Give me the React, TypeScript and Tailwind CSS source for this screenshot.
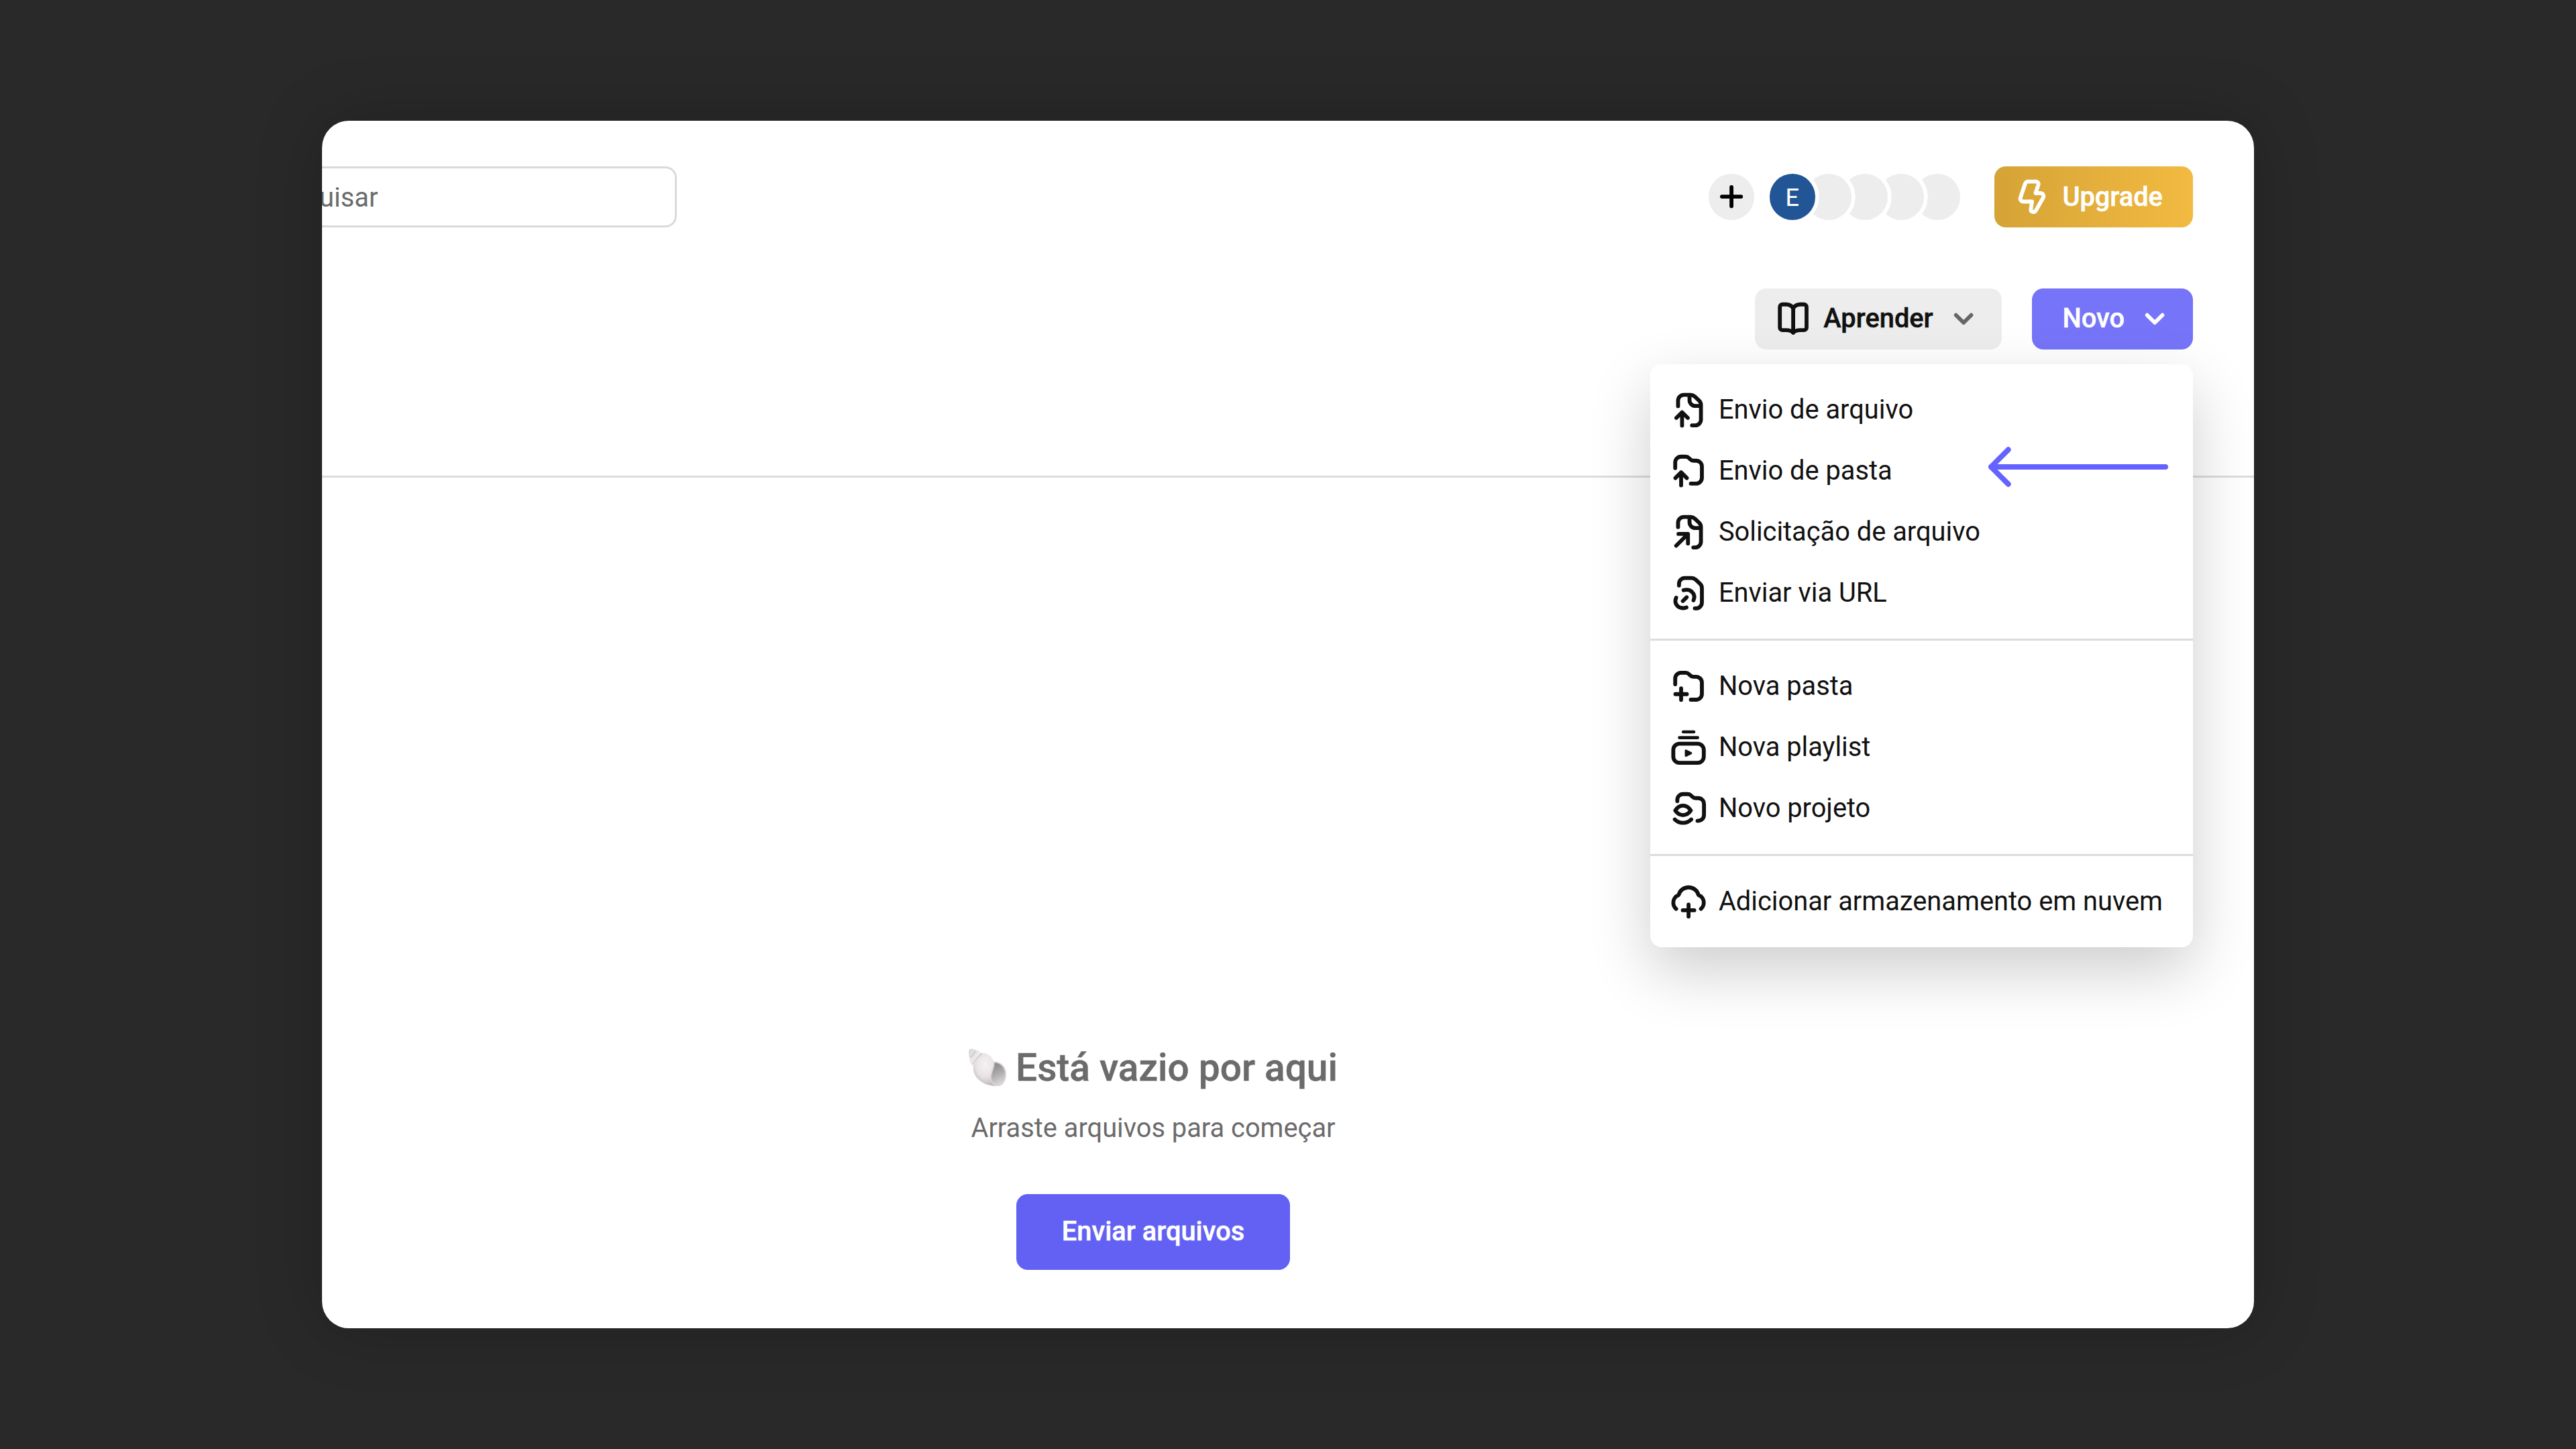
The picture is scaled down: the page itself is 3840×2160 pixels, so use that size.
import type { ReactNode } from "react";

interface IconProps {
  className?: string;
  children: ReactNode;
}

const Icon = ({ className = "", children }: IconProps) => (
  <svg
    viewBox="0 0 24 24"
    fill="none"
    stroke="currentColor"
    strokeWidth={2.05}
    strokeLinecap="round"
    strokeLinejoin="round"
    className={`size-[68.2px] shrink-0 ${className}`}
  >
    {children}
  </svg>
);

const FOLDER =
  "M5 10.5V7.5a3 3 0 0 1 3-3h2.5c.7 0 1.3.3 1.8.8l.5.5c.5.5 1.1.8 1.8.8H16a3 3 0 0 1 3 3v6a3 3 0 0 1-3 3h-2.8";

const FileUploadIcon = () => (
  <Icon>
    <path d="M6.5 10V7.1a3 3 0 0 1 3-3h3.6c.8 0 1.5.3 2.1.8l2.4 2.3c.6.6.9 1.3.9 2.1v7.8a3 3 0 0 1-3 3h-1.7" />
    <path d="M12.5 4.3v2.6a3 3 0 0 0 3 3h2.8" />
    <path d="M5.6 16.2l3-3 3 3M8.6 13.4v6.8" />
  </Icon>
);

const FolderUploadIcon = () => (
  <Icon>
    <path d={FOLDER} />
    <path d="M5.1 15.7l3-3 3 3M8.1 12.9v6.6" />
  </Icon>
);

const FileRequestIcon = () => (
  <Icon>
    <path d="M6.5 9.4V7.1a3 3 0 0 1 3-3h3.6c.8 0 1.5.3 2.1.8l2.4 2.3c.6.6.9 1.3.9 2.1v7.8a3 3 0 0 1-3 3h-1" />
    <path d="M12.5 4.3v2.6a3 3 0 0 0 3 3h2.8" />
    <path d="M6.7 13h5v5M11.5 13.2l-6 6" />
  </Icon>
);

const LinkIcon = () => (
  <Icon>
    <path d="M7 8v-.9a3 3 0 0 1 3-3h3.6c.8 0 1.5.3 2.1.8l2.4 2.3c.6.6.9 1.3.9 2.1v7.7a3 3 0 0 1-3 3h-.7" />
    <path d="M5.5 14.4c-.7 1.6-.5 3.2.7 4.4 1.2 1.1 3 1.3 4.7.7" />
    <path d="M9.4 10.5c1.6-.5 3.3-.2 4.4.9 1.2 1.2 1.5 2.9.8 4.4" />
    <path d="M9 16.2l2-2" />
  </Icon>
);

const NewFolderIcon = () => (
  <Icon>
    <g transform="translate(0 .4)">
      <path d={FOLDER} />
    </g>
    <path d="M5.1 16.1h6M8.1 13.1v6" />
  </Icon>
);

const PlaylistIcon = () => (
  <Icon>
    <path strokeWidth={1.6} d="M9.2 3.9h5.6M7.2 6.9h9.6" />
    <rect x="4" y="10.1" width="16" height="10" rx="3.2" />
    <path
      d="M10.6 13.7v2.7l2.7-1.35z"
      fill="currentColor"
      strokeWidth={1.1}
    />
  </Icon>
);

const ProjectIcon = () => (
  <Icon>
    <path d="M6.1 8.2v-.7a3 3 0 0 1 3-3h2.5c.7 0 1.3.3 1.8.8l.5.5c.5.5 1.1.8 1.8.8h1.4a3 3 0 0 1 3 3v5.6c0 2-1.2 3.3-3.4 3.3" />
    <path d="M5 13.1c1-1.6 2.4-2.6 4.1-2.6s3.1 1 4.1 2.6c-1 1.5-2.4 2.4-4.1 2.4s-3.1-.9-4.1-2.4z" />
    <path d="M4.8 17.8c1.3 1.2 2.7 1.8 4.3 1.8s3-.6 4.3-1.8" />
  </Icon>
);

const CloudPlusIcon = () => (
  <Icon>
    <path d="M5.5 15.8C4.6 15 4 13.8 4 12.5c0-1.8 1.1-3.4 2.8-4C7.4 6.1 9.5 4.5 12 4.5s4.6 1.6 5.2 4c1.7.6 2.8 2.2 2.8 4 0 1.3-.6 2.5-1.5 3.3" />
    <path d="M9 16.5h6M12 13.5v6.3" />
  </Icon>
);

const BoltIcon = () => (
  <Icon>
    <path d="M9.9 4.1h4.2c.9 0 1.5.8 1.2 1.7l-1.4 4.4h2.5c1.3 0 2.1 1.3 1.4 2.5l-3.7 6.5c-.4.7-1.1 1-1.8.8s-1-.8-.9-1.5l.6-3.9H7.6c-1.3 0-2.1-1.1-1.6-2.3L8.4 5.2c.3-.7.8-1.1 1.5-1.1z" />
  </Icon>
);

const BookIcon = () => (
  <Icon>
    <path d="M12 6.5C11.2 5.2 9.8 4.5 8.2 4.5H6.4C5.6 4.5 5 5.1 5 5.9v10.7c0 .8.6 1.4 1.4 1.4h1.9c1.6 0 2.9.4 3.7 1.3.8-.9 2.1-1.3 3.7-1.3h1.9c.8 0 1.4-.6 1.4-1.4V5.9c0-.8-.6-1.4-1.4-1.4h-1.8c-1.6 0-3 .7-3.8 2z" />
    <path d="M12 6.5v12.8" />
  </Icon>
);

const ChevronIcon = ({ className = "" }: { className?: string }) => (
  <Icon className={className}>
    <path d="M8 10.1l4 4 4-4" />
  </Icon>
);

const ShellIcon = () => (
  <svg viewBox="0 0 56 56" className="mb-[2px] size-[56px] shrink-0">
    <defs>
      <linearGradient id="shellSpire" x1="0" y1="0" x2="1" y2="1">
        <stop offset="0" stopColor="#d8d3d3" />
        <stop offset="0.5" stopColor="#efebec" />
        <stop offset="1" stopColor="#d8d1d2" />
      </linearGradient>
      <radialGradient id="shellWhorl" cx="0.5" cy="0.35" r="0.65">
        <stop offset="0" stopColor="#f5f2f3" />
        <stop offset="0.6" stopColor="#e8e2e4" />
        <stop offset="1" stopColor="#c2b9b9" />
      </radialGradient>
      <linearGradient id="shellMouth" x1="0.3" y1="0" x2="0.6" y2="1">
        <stop offset="0" stopColor="#868484" />
        <stop offset="0.5" stopColor="#adabab" />
        <stop offset="1" stopColor="#dedcdc" />
      </linearGradient>
    </defs>
    <path
      d="M.7 1.5C3 0 8 .3 10 2.5c4 0 8 2 10 5L9 32c-2-1-3.5-4-3.3-7C3 23 1.5 20 2 16 0 12-.3 6 .7 1.5z"
      fill="url(#shellSpire)"
    />
    <path
      d="M20 6.5c9 0 17 7 17.5 15 .5 7-5 14-3.5 22 1 6 4 10 9 12-7 .5-14-.5-19-3C15 48 8 41 7 32c0-4 1-8 3-11 3-6 6-11 10-14.5z"
      fill="url(#shellWhorl)"
    />
    <path
      d="M2 13C6 11 9 7 10.5 3M5.7 24C9 18 14 12 20 7.5"
      fill="none"
      stroke="#c8c1c2"
      strokeWidth="1.3"
    />
    <path
      d="M38 20.2c9 0 17 7 17 18 0 10-5 17-11.5 16.8C36 54.5 32 48 33 41c1-8 5-12 5-20.8z"
      fill="url(#shellMouth)"
      stroke="#dad6d6"
      strokeWidth="2"
    />
  </svg>
);

const MENU_GROUPS: { label: string; icon: ReactNode }[][] = [
  [
    { label: "Envio de arquivo", icon: <FileUploadIcon /> },
    { label: "Envio de pasta", icon: <FolderUploadIcon /> },
    { label: "Solicitação de arquivo", icon: <FileRequestIcon /> },
    { label: "Enviar via URL", icon: <LinkIcon /> },
  ],
  [
    { label: "Nova pasta", icon: <NewFolderIcon /> },
    { label: "Nova playlist", icon: <PlaylistIcon /> },
    { label: "Novo projeto", icon: <ProjectIcon /> },
  ],
  [{ label: "Adicionar armazenamento em nuvem", icon: <CloudPlusIcon /> }],
];

const NewMenu = () => (
  <div className="absolute right-0 top-[113px] z-10 w-[809px] rounded-[17px] bg-white text-[#111] shadow-[0_34px_91px_rgba(0,0,0,0.2)]">
    {MENU_GROUPS.map((group, i) => (
      <ul
        key={i}
        className="border-[#dcdcdc] py-[22.7px] not-first:border-t-[3px]"
      >
        {group.map((item) => (
          <li
            key={item.label}
            className="flex h-[90.9px] items-center gap-[11px] whitespace-nowrap px-[22.7px]"
          >
            {item.icon}
            <span className="-mt-px">{item.label}</span>
          </li>
        ))}
      </ul>
    ))}
    {/* points at "Envio de pasta" */}
    <svg
      viewBox="0 0 268 60"
      fill="none"
      stroke="#6563ff"
      strokeWidth="8"
      strokeLinecap="round"
      strokeLinejoin="round"
      className="absolute right-[37px] top-[123px] h-[60px] w-[268px]"
    >
      <path d="M264 30H4M29.7 4.3L4 30l25.7 25.7" />
    </svg>
  </div>
);

const Avatars = () => (
  <div className="flex items-center">
    <div className="z-[5] flex size-[68.4px] items-center justify-center rounded-full bg-[#225595] font-['Lato',sans-serif] text-[37px] text-white ring-[5.7px] ring-white">
      <span className="-mt-px">E</span>
    </div>
    <div className="z-[4] -ml-[14.4px] size-[68.4px] rounded-full bg-[#ededed] ring-[5.7px] ring-white" />
    <div className="z-[3] -ml-[14.4px] size-[68.4px] rounded-full bg-[#ededed] ring-[5.7px] ring-white" />
    <div className="z-[2] -ml-[14.4px] size-[68.4px] rounded-full bg-[#ededed] ring-[5.7px] ring-white" />
    <div className="z-[1] -ml-[14.4px] size-[68.4px] rounded-full bg-[#ededed] ring-[5.7px] ring-white" />
  </div>
);

const App = () => {
  return (
    <div className="flex h-[2160px] w-[3840px] items-center justify-center bg-[#292929] font-['Roboto',sans-serif] text-[39.8px] leading-[57px]">
      <main className="h-[1800px] w-[2880px] overflow-hidden rounded-[40px] bg-white shadow-[0_0_100px_rgba(0,0,0,0.2)]">
        <header className="flex h-[529px] flex-col pr-[91px] pt-[68px]">
          <div className="flex h-[91px] items-center">
            <div className="-ml-[180px] flex h-[91px] w-[709px] items-center rounded-[17px] border-[3px] border-[#dadada] pl-[84px] pt-[2px] text-[#6b6b6b]">
              Pesquisar
            </div>
            <button className="ml-auto mr-[22.3px] flex size-[68.4px] items-center justify-center rounded-full bg-[#ededed] text-black">
              <Icon>
                <path d="M12 7v10M7 12h10" />
              </Icon>
            </button>
            <Avatars />
            <button className="ml-[50.5px] flex h-[91px] w-[296.5px] items-center gap-[11px] rounded-[17px] bg-linear-to-r from-[#d5a336] to-[#f2ba41] pl-[22.7px] font-medium text-white [-webkit-text-stroke:0.5px]">
              <BoltIcon />
              <span className="-mt-px">Upgrade</span>
            </button>
          </div>
          <div className="mt-[91px] flex h-[91px] justify-end gap-[45px]">
            <button className="flex w-[368px] items-center justify-between rounded-[17px] bg-[#ededed] px-[22.7px] font-medium text-[#111] [-webkit-text-stroke:0.5px]">
              <BookIcon />
              <span className="-mt-[2px]">Aprender</span>
              <ChevronIcon className="text-[#666]" />
            </button>
            <div className="relative">
              <button className="flex h-[91px] w-[240px] items-center justify-between rounded-[17px] bg-[#7674f8] pl-[45.5px] pr-[22.7px] font-medium text-white [-webkit-text-stroke:0.5px]">
                <span className="-mt-[2px]">Novo</span>
                <ChevronIcon />
              </button>
              <NewMenu />
            </div>
          </div>
        </header>
        <hr className="border-t-[3px] border-[#dcdcdc]" />
        <section className="mr-[402px] flex flex-col items-center pt-[846px] text-[#6b6b6b]">
          <h2 className="flex items-center gap-[14px] text-[56.8px] font-medium leading-[68px] [-webkit-text-stroke:0.5px]">
            <ShellIcon />
            Está vazio por aqui
          </h2>
          <p className="mt-[27px]">Arraste arquivos para começar</p>
          <button className="mt-[70px] flex h-[113px] items-center rounded-[17px] bg-[#6361f3] px-[68.2px] font-medium text-white [-webkit-text-stroke:0.5px]">
            <span className="-mt-[2px]">Enviar arquivos</span>
          </button>
        </section>
      </main>
    </div>
  );
};

export default App;
